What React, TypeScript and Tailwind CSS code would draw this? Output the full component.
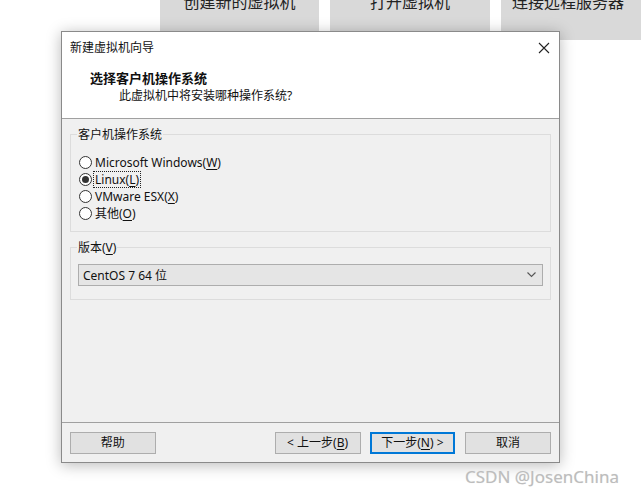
import React from "react";

const font = "font-['Noto_Sans','Noto_Sans_CJK_SC',sans-serif]";

function U({ children }: { children: React.ReactNode }) {
  return <span className="underline underline-offset-2 decoration-1">{children}</span>;
}

function Radio({ checked, children, focus }: { checked?: boolean; children: React.ReactNode; focus?: boolean }) {
  return (
    <div className="flex h-[17px] items-center">
      <span className="flex h-[13px] w-[13px] items-center justify-center rounded-full border border-[#333] bg-white">
        {checked && <span className="h-[7px] w-[7px] rounded-full bg-[#333]" />}
      </span>
      <span
        className={
          "ml-[2px] px-[1px] leading-[15px] " +
          (focus ? "outline outline-1 outline-dotted outline-[#222]" : "")
        }
      >
        {children}
      </span>
    </div>
  );
}

function Btn({ children, primary, className }: { children: React.ReactNode; primary?: boolean; className?: string }) {
  return (
    <div
      className={
        "flex h-[22px] w-[86px] items-center justify-center bg-[#e1e1e1] text-[12px] text-[#111] " +
        (primary ? "border-2 border-[#0078d7] " : "border border-[#adadad] ") +
        (className ?? "")
      }
    >
      {children}
    </div>
  );
}

export default function App() {
  return (
    <div className={"relative h-[496px] w-[641px] overflow-hidden bg-white " + font}>
      {/* background launcher tiles, scrolled partly out of view */}
      <div className="flex">
        <div className="ml-[160px] flex h-[40px] w-[159px] items-start justify-center bg-[#d9d9d9] text-[16px] leading-[12px] text-[#222]">
          <span className="-mt-[4px]">创建新的虚拟机</span>
        </div>
        <div className="ml-[11px] flex h-[40px] w-[160px] items-start justify-center bg-[#d9d9d9] text-[16px] leading-[12px] text-[#222]">
          <span className="-mt-[4px]">打开虚拟机</span>
        </div>
        <div className="ml-[11px] flex h-[40px] w-[140px] items-start justify-center bg-[#d9d9d9] text-[16px] leading-[12px] text-[#222]">
          <span className="-mt-[4px] -ml-[6px]">连接远程服务器</span>
        </div>
      </div>

      {/* wizard dialog */}
      <div className="absolute left-[61px] top-[31px] flex h-[432px] w-[499px] flex-col border border-[#8a8a8a] bg-[#f0f0f0] text-[12px] text-[#111] shadow-[0_2px_14px_rgba(0,0,0,0.28)]">
        <div className="h-[86px] bg-white">
          <div className="flex h-[30px] items-center justify-between pl-[8px] pr-[9px] pt-[1px]">
            <span className="text-[12px]">新建虚拟机向导</span>
            <svg width="12" height="12" viewBox="0 0 12 12" className="mt-[1px]">
              <path d="M1 1L11 11M11 1L1 11" stroke="#222" strokeWidth="1.1" />
            </svg>
          </div>
          <div className="ml-[28px] mt-[8px] text-[13px] font-bold leading-[16px]">选择客户机操作系统</div>
          <div className="ml-[57px] mt-[2px] text-[12px] leading-[16px]">此虚拟机中将安装哪种操作系统?</div>
        </div>
        <div className="h-px bg-[#a0a0a0]" />

        <div className="flex flex-1 flex-col px-[8px] pt-[15px]">
          <div className="relative h-[98px] border border-[#dcdcdc] pl-[8px] pt-[19px]">
            <span className="absolute -top-[8px] left-[6px] bg-[#f0f0f0] px-[1px] leading-[15px]">客户机操作系统</span>
            <Radio>
              Microsoft Windows(<U>W</U>)
            </Radio>
            <Radio checked focus>
              Linux(<U>L</U>)
            </Radio>
            <Radio>
              VMware ESX(<U>X</U>)
            </Radio>
            <Radio>
              其他(<U>O</U>)
            </Radio>
          </div>

          <div className="relative mt-[15px] h-[53px] border border-[#dcdcdc] px-[7px] pt-[16px]">
            <span className="absolute -top-[8px] left-[6px] bg-[#f0f0f0] px-[1px] leading-[15px]">
              版本(<U>V</U>)
            </span>
            <div className="flex h-[22px] items-center justify-between border border-[#adadad] bg-[#e5e5e5] pl-[4px] pr-[6px]">
              <span className="leading-[15px]">CentOS 7 64 位</span>
              <svg width="9" height="6" viewBox="0 0 9 6">
                <path d="M0.5 0.5L4.5 4.5L8.5 0.5" stroke="#555" strokeWidth="1.1" fill="none" />
              </svg>
            </div>
          </div>
        </div>

        <div className="h-px bg-[#a0a0a0]" />
        <div className="flex h-[39px] items-start px-[8px] pt-[9px]">
          <Btn>帮助</Btn>
          <Btn className="ml-[119px]">&lt; 上一步(<U>B</U>)</Btn>
          <Btn primary className="ml-[9px]">
            下一步(<U>N</U>) &gt;
          </Btn>
          <Btn className="ml-[10px]">取消</Btn>
        </div>
      </div>

      {/* watermark */}
      <div className="absolute left-[465px] top-[466px] text-[17px] leading-[22px] text-[#bdbdbd] [text-shadow:0_0_1px_#e0e0e0]">
        CSDN @JosenChina
      </div>
    </div>
  );
}
